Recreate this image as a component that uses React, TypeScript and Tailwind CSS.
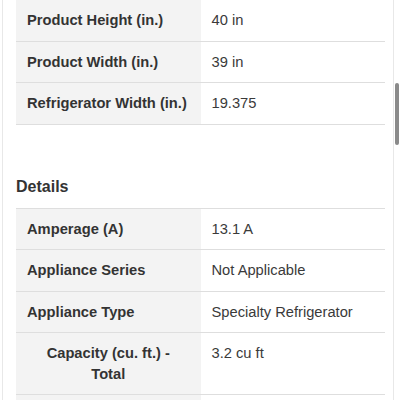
const dimensions = [
  { label: 'Product Height (in.)', value: '40 in' },
  { label: 'Product Width (in.)', value: '39 in' },
  { label: 'Refrigerator Width (in.)', value: '19.375' },
];

const details = [
  { label: 'Amperage (A)', value: '13.1 A' },
  { label: 'Appliance Series', value: 'Not Applicable' },
  { label: 'Appliance Type', value: 'Specialty Refrigerator' },
  { label: 'Capacity (cu. ft.) - Total', value: '3.2 cu ft', center: true },
];

function SpecRow({
  label,
  value,
  center,
}: {
  label: string;
  value: string;
  center?: boolean;
}) {
  return (
    <div className="grid grid-cols-2 border-b border-[#dedede]">
      <div
        className={`bg-[#f3f3f3] px-[11px] py-[10px] font-bold text-[#333] leading-[20.5px] ${
          center ? 'text-center px-[22px]' : ''
        }`}
      >
        {label}
      </div>
      <div className="px-[11px] py-[10px] text-[#3a3a3a] leading-[20.5px]">{value}</div>
    </div>
  );
}

export default function App() {
  return (
    <div className="relative h-[400px] w-[400px] overflow-hidden bg-white font-['Liberation_Sans',Arial,sans-serif] text-[14.7px]">
      <div className="ml-[2px] w-[392px] h-full border-x border-[#e8e8e8] pl-[13px] pr-[8px]">
        <div>
          {dimensions.map((r) => (
            <SpecRow key={r.label} label={r.label} value={r.value} />
          ))}
        </div>

        <h2 className="mt-[52px] mb-[11px] text-[16px] leading-5 font-bold text-[#333]">
          Details
        </h2>

        <div className="border-t border-[#dedede]">
          {details.map((r) => (
            <SpecRow key={r.label} label={r.label} value={r.value} center={r.center} />
          ))}
          {/* next row, only its top edge is in view */}
          <div className="grid grid-cols-2 h-[20px]">
            <div className="bg-[#f3f3f3]" />
            <div />
          </div>
        </div>
      </div>

      {/* scrollbar thumb */}
      <div className="absolute right-[1px] top-[83px] h-[62px] w-[4px] rounded-full bg-[#8a8a8a]" />
    </div>
  );
}
